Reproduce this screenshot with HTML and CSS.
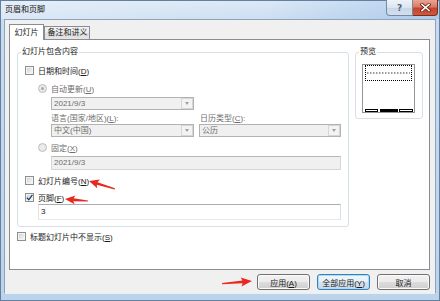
FILE: index.html
```html
<!DOCTYPE html>
<html lang="zh">
<head>
    <meta charset="UTF-8">
    <title>页眉和页脚</title>
    <link rel="stylesheet" href="styles.css">
</head>
<body>
<div class="window">
    <div class="titlebar">
        <span class="title">页眉和页脚</span>
        <div class="caption">
            <span class="cap help">?</span>
            <span class="cap close">
                <svg width="11" height="9" viewBox="0 0 11 9">
                    <path d="M2 1.5 L9 7.5 M9 1.5 L2 7.5" stroke="#6a2415" stroke-width="3.2" stroke-linecap="square"/>
                    <path d="M2 1.5 L9 7.5 M9 1.5 L2 7.5" stroke="#fff" stroke-width="1.6" stroke-linecap="square"/>
                </svg>
            </span>
        </div>
    </div>
    <div class="client">
        <div class="tabs">
            <div class="tab active">幻灯片</div>
            <div class="tab">备注和讲义</div>
        </div>
        <div class="panel">
            <div class="panel-top">
                <fieldset class="group main">
                    <legend>幻灯片包含内容</legend>
                    <div class="check"><span class="box"></span><span>日期和时间(<u>D</u>)</span></div>
                    <div class="radio r-auto"><span class="dot on"></span><span>自动更新(<u>U</u>)</span></div>
                    <div class="combo c-date"><span class="val">2021/9/3</span><span class="arrow"></span></div>
                    <div class="labels">
                        <span class="lang">语言(国家/地区)(<u>L</u>):</span>
                        <span>日历类型(<u>C</u>):</span>
                    </div>
                    <div class="combos">
                        <div class="combo"><span class="val">中文(中国)</span><span class="arrow"></span></div>
                        <div class="combo wide"><span class="val">公历</span><span class="arrow"></span></div>
                    </div>
                    <div class="radio r-fixed"><span class="dot"></span><span>固定(<u>X</u>)</span></div>
                    <div class="field disabled">2021/9/3</div>
                    <div class="check c-num"><span class="box"></span><span>幻灯片编号(<u>N</u>)</span></div>
                    <div class="check c-foot">
                        <span class="box">
                            <svg width="7" height="7" viewBox="0 0 7 7"><path d="M0.8 3.6 L2.8 5.8 L6.4 0.8" fill="none" stroke="#213f78" stroke-width="1.3"/></svg>
                        </span>
                        <span>页脚(<u>F</u>)</span>
                    </div>
                    <div class="field text">3</div>
                </fieldset>
                <fieldset class="group preview">
                    <legend>预览</legend>
                    <div class="slide">
                        <div class="slide-head"><span class="squiggle"></span></div>
                        <div class="slide-foot"><span></span><span class="cur"></span><span></span></div>
                    </div>
                </fieldset>
            </div>
            <div class="check c-title"><span class="box"></span><span>标题幻灯片中不显示(<u>S</u>)</span></div>
        </div>
        <div class="buttons">
            <button>应用(<u>A</u>)</button>
            <button class="default">全部应用(<u>Y</u>)</button>
            <button>取消</button>
        </div>
    </div>

    <!-- annotation arrows drawn over the dialog -->
    <svg class="marks" width="440" height="301" viewBox="0 0 440 301">
        <g fill="#e8291f">
            <polygon transform="translate(89 181) rotate(17)" points="0,0 10,-4.5 8.5,-1.4 27,-0.6 27,0.6 8.5,1.4 10,4.5"/>
            <polygon transform="translate(65 199) rotate(5)" points="0,0 10,-4.5 8.5,-1.4 23,-0.6 23,0.6 8.5,1.4 10,4.5"/>
            <polygon transform="translate(252 281) rotate(175)" points="0,0 11,-4.5 9.5,-1.4 30,-0.6 30,0.6 9.5,1.4 11,4.5"/>
        </g>
    </svg>
</div>
</body>
</html>
```

FILE: styles.css
```css
body {
    margin: 0;
    font-family: "Liberation Sans", "Noto Sans CJK SC", sans-serif;
    font-size: 8px;
    color: #1a1a1a;
}
.window {
    position: relative;
    width: 440px;
    height: 301px;
    box-sizing: border-box;
    border: 1px solid #64809e;
    padding: 0 3px 6px 3px;
    background: linear-gradient(180deg, #d8e6f5 0, #c8dbf0 18px, #bcd3ec 100%);
    display: flex;
    flex-direction: column;
}
.titlebar {
    height: 18px;
    display: flex;
    justify-content: space-between;
    align-items: flex-start;
    background: linear-gradient(90deg, rgba(255,255,255,0.35) 0, rgba(255,255,255,0.1) 60%, rgba(120,170,225,0.35) 100%);
    margin: 0 -3px;
    padding: 0 3px;
}
.title {
    padding-left: 1px;
    line-height: 17px;
    color: #111;
}
.caption {
    display: flex;
    margin-top: -1px;
    margin-right: -2px;
}
.cap {
    height: 16px;
    box-sizing: border-box;
    display: flex;
    align-items: center;
    justify-content: center;
}
.help {
    width: 27px;
    border: 1px solid #7489a2;
    border-top: none;
    border-radius: 0 0 0 4px;
    background: linear-gradient(180deg, #eef3f9 0, #dbe5f0 50%, #c6d5e6 51%, #d3e0ee 100%);
    font-family: "DejaVu Sans", sans-serif;
    font-size: 9px;
    font-weight: bold;
    color: #52637a;
}
.close {
    width: 25px;
    border: 1px solid #7a2d20;
    border-top: none;
    border-left: none;
    border-radius: 0 0 4px 0;
    background: linear-gradient(180deg, #e9a595 0, #dc7a66 45%, #c7442c 55%, #d0583c 100%);
}
.client {
    flex: 1;
    box-sizing: border-box;
    border: 1px solid #8ea3ba;
    border-bottom-color: #e9eff7;
    background-color: #f0f0f0;
    padding: 4px 5px 3px 4px;
    display: flex;
    flex-direction: column;
}
.tabs {
    display: flex;
    align-items: flex-end;
    height: 16px;
    margin-bottom: -1px;
    position: relative;
    z-index: 1;
}
.tab {
    box-sizing: border-box;
    height: 14px;
    width: 46px;
    border: 1px solid #898c95;
    background: linear-gradient(180deg, #f3f3f3 0, #ebebeb 50%, #dedede 51%, #e5e5e5 100%);
    text-align: center;
    line-height: 12px;
    padding-left: 1px;
}
.tab.active {
    width: 35px;
    height: 16px;
    border-bottom: none;
    background: #fff;
    line-height: 15px;
    padding-left: 0;
}
.panel {
    box-sizing: border-box;
    height: 231px;
    background-color: #fff;
    border: 1px solid #898c95;
    padding: 6px 6px 0 7px;
}
.panel-top {
    display: flex;
    align-items: flex-start;
    gap: 6px;
}
.group {
    box-sizing: border-box;
    margin: 0;
    min-width: 0;
    border: 1px solid #d5dfe5;
    border-radius: 3px;
}
.group legend {
    line-height: 12px;
    padding: 0 1px;
    margin-left: -4px;
}
.main {
    width: 332px;
    padding: 6px 7px 6px 7px;
}
.preview {
    width: 68px;
    padding: 6px 7px 5px 6px;
}
.preview legend {
    margin-left: -3px;
}
.check {
    height: 12px;
    display: flex;
    align-items: center;
    gap: 4px;
}
.box {
    width: 9px;
    height: 9px;
    box-sizing: border-box;
    border: 1px solid #8e8f8f;
    background: linear-gradient(135deg, #cdcdcd 0, #eeeeee 70%, #f8f8f8 100%);
    box-shadow: inset 0 0 0 1px #f4f4f4;
    display: flex;
    align-items: center;
    justify-content: center;
}
.box svg {
    display: block;
}
.radio {
    height: 12px;
    display: flex;
    align-items: center;
    gap: 4px;
    margin-left: 13px;
    color: #6d6d6d;
}
.dot {
    width: 9px;
    height: 9px;
    box-sizing: border-box;
    border: 1px solid #bcbcbc;
    border-radius: 50%;
    background: radial-gradient(circle, #f0f0f0 0, #e4e4e4 100%);
    display: flex;
    align-items: center;
    justify-content: center;
}
.dot.on::after {
    content: "";
    width: 3px;
    height: 3px;
    border-radius: 50%;
    background-color: #a8a8a8;
}
.r-auto {
    margin-top: 6px;
}
.r-fixed {
    margin-top: 4px;
}
.combo {
    box-sizing: border-box;
    height: 13px;
    width: 143px;
    border: 1px solid #b2b2b2;
    background-color: #f0f0f0;
    display: flex;
    color: #6d6d6d;
}
.combo .val {
    flex: 1;
    padding-left: 2px;
    line-height: 11px;
}
.combo .arrow {
    width: 12px;
    box-sizing: border-box;
    border: 1px solid #d6d6d6;
    margin: 0;
    background-color: #f3f3f3;
    display: flex;
    align-items: center;
    justify-content: center;
}
.combo .arrow::after {
    content: "";
    border-left: 2.5px solid transparent;
    border-right: 2.5px solid transparent;
    border-top: 3px solid #a0a0a0;
}
.c-date {
    margin: 3px 0 0 26px;
}
.labels {
    height: 14px;
    margin-left: 26px;
    display: flex;
    align-items: center;
    color: #6d6d6d;
}
.labels .lang {
    width: 149px;
}
.combos {
    margin-left: 26px;
    display: flex;
    gap: 5px;
}
.combo.wide {
    flex: 1;
    width: auto;
}
.field {
    box-sizing: border-box;
    padding-left: 2px;
    border: 1px solid #abadb3;
    border-color: #abadb3 #dbdfe6 #e3e9ef #e2e3ea;
}
.field.disabled {
    height: 14px;
    margin: 3px 0 0 26px;
    line-height: 12px;
    background-color: #f0f0f0;
    border-color: #b8b8b8 #d6d6d6 #d6d6d6 #d6d6d6;
    color: #6d6d6d;
}
.field.text {
    height: 16px;
    margin: 1px 0 0 13px;
    line-height: 14px;
    background-color: #fff;
}
.c-num {
    margin-top: 4px;
}
.c-foot {
    margin-top: 5px;
}
.c-title {
    margin-top: 3px;
}
.slide {
    box-sizing: border-box;
    height: 49px;
    border: 1px solid #959595;
    display: flex;
    flex-direction: column;
    justify-content: space-between;
}
.slide-head {
    height: 16px;
    margin: 0 2px;
    box-sizing: border-box;
    border: 1px dotted #000;
    display: flex;
    align-items: center;
    padding: 0 1px;
}
.squiggle {
    flex: 1;
    height: 2px;
    background: repeating-linear-gradient(90deg, #9c9c9c 0 1px, #d0d0d0 1px 2px, #fff 2px 3px);
}
.slide-foot {
    height: 3px;
    display: flex;
    justify-content: space-between;
    padding: 0 1px 0 2px;
}
.slide-foot span {
    width: 13px;
    box-sizing: border-box;
    border: 1px solid #000;
}
.slide-foot span:last-child {
    width: 14px;
}
.slide-foot .cur {
    width: 18px;
    background-color: #000;
}
.buttons {
    display: flex;
    justify-content: flex-end;
    gap: 7px;
    margin-top: 4px;
}
.buttons button {
    width: 53px;
    height: 16px;
    padding: 0;
    border: 1px solid #707070;
    border-radius: 3px;
    background: linear-gradient(180deg, #f2f2f2 0, #ebebeb 50%, #dddddd 51%, #cfcfcf 100%);
    box-shadow: inset 0 0 0 1px #fbfbfb;
    font-family: "Liberation Sans", "Noto Sans CJK SC", sans-serif;
    font-size: 8px;
    color: #1a1a1a;
}
.buttons button.default {
    border-color: #3c7fb1;
    box-shadow: inset 0 0 0 1px #a7dcf7;
    background: linear-gradient(180deg, #f0f6fb 0, #e6eff7 50%, #d4e2ef 51%, #c9d9ea 100%);
}
.marks {
    position: absolute;
    left: -1px;
    top: -1px;
    pointer-events: none;
}
```
